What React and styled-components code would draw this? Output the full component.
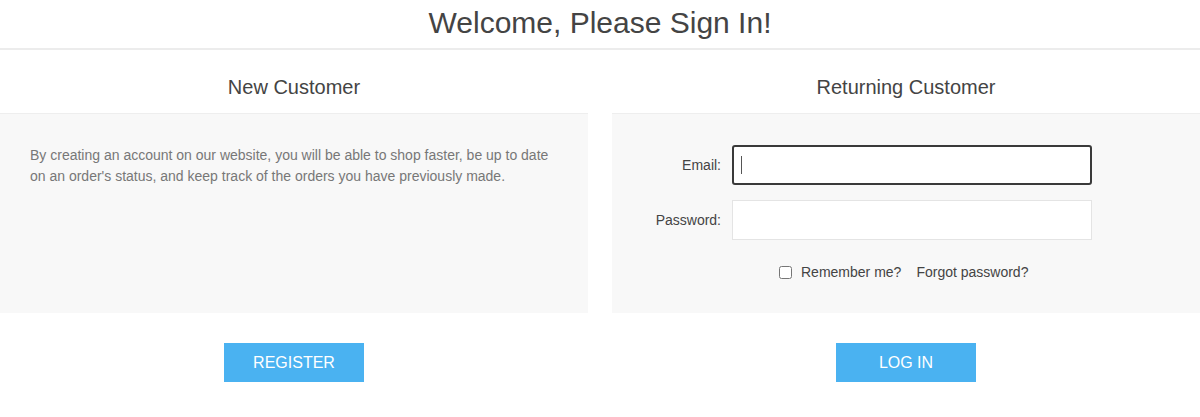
import React from 'react'
import styled, { createGlobalStyle } from 'styled-components'

const GlobalStyle = createGlobalStyle`
  body {
    margin: 0;
    background: #fff;
    font-family: Arial, 'Liberation Sans', sans-serif;
    color: #444;
  }
`

const PageTitle = styled.h1`
  margin: 0;
  height: 48px;
  line-height: 46px;
  text-align: center;
  font-size: 30px;
  font-weight: 400;
  color: #444;
  border-bottom: 2px solid #ececec;
`

const Columns = styled.div`
  display: grid;
  grid-template-columns: 588px 588px;
  column-gap: 24px;
`

const Column = styled.section`
  display: flex;
  flex-direction: column;
`

const ColumnTitle = styled.h2`
  margin: 0;
  height: 63px;
  line-height: 74px;
  text-align: center;
  font-size: 20px;
  font-weight: 400;
  color: #444;
`

const Panel = styled.div`
  height: 200px;
  background: #f8f8f8;
  border-top: 1px solid #eeeeee;
  box-sizing: border-box;
  padding: ${props => props.pad || '0'};
`

const Intro = styled.p`
  margin: 0;
  font-size: 14px;
  line-height: 21px;
  color: #777;
`

const FormGrid = styled.div`
  display: grid;
  grid-template-columns: 120px 360px;
  row-gap: 15px;
  align-items: center;
`

const Label = styled.label`
  text-align: right;
  padding-right: 11px;
  font-size: 14px;
  color: #444;
`

const InputBox = styled.div`
  position: relative;
`

const Input = styled.input`
  display: block;
  width: 360px;
  height: 40px;
  box-sizing: border-box;
  background: #fff;
  border: ${props => (props.focused ? '2px solid #3a3a3a' : '1px solid #e4e4e4')};
  border-radius: ${props => (props.focused ? '3px' : '0')};
  outline: none;
  font-size: 14px;
  padding: 0 8px;
`

const Caret = styled.span`
  position: absolute;
  left: 9px;
  top: 11px;
  width: 1px;
  height: 18px;
  background: #555;
`

const Options = styled.div`
  grid-column: 2;
  display: flex;
  align-items: center;
  margin-top: 9px;
  padding-left: 43px;
  font-size: 14px;
  color: #444;
`

const Check = styled.input`
  width: 13px;
  height: 13px;
  margin: 0 9px 0 4px;
`

const ForgotLink = styled.a`
  margin-left: 15px;
  color: #444;
  text-decoration: none;
`

const ButtonRow = styled.div`
  display: flex;
  justify-content: center;
  padding-top: 30px;
`

const Button = styled.button`
  width: 140px;
  height: 39px;
  border: none;
  background: #4ab2f1;
  color: #fff;
  font-family: Arial, 'Liberation Sans', sans-serif;
  font-size: 16px;
  text-transform: uppercase;
  cursor: pointer;
`

const App = () => {
  return (
    <>
      <GlobalStyle />
      <PageTitle>Welcome, Please Sign In!</PageTitle>
      <Columns>
        <Column>
          <ColumnTitle>New Customer</ColumnTitle>
          <Panel pad="31px 30px">
            <Intro>
              By creating an account on our website, you will be able to shop faster, be up to date
              on an order's status, and keep track of the orders you have previously made.
            </Intro>
          </Panel>
          <ButtonRow>
            <Button>Register</Button>
          </ButtonRow>
        </Column>
        <Column>
          <ColumnTitle>Returning Customer</ColumnTitle>
          <Panel pad="31px 0 0 0">
            <FormGrid>
              <Label>Email:</Label>
              <InputBox>
                <Input type="email" focused />
                <Caret />
              </InputBox>
              <Label>Password:</Label>
              <InputBox>
                <Input type="password" />
              </InputBox>
              <Options>
                <Check type="checkbox" />
                <span>Remember me?</span>
                <ForgotLink href="#">Forgot password?</ForgotLink>
              </Options>
            </FormGrid>
          </Panel>
          <ButtonRow>
            <Button>Log in</Button>
          </ButtonRow>
        </Column>
      </Columns>
    </>
  )
}

export default App
